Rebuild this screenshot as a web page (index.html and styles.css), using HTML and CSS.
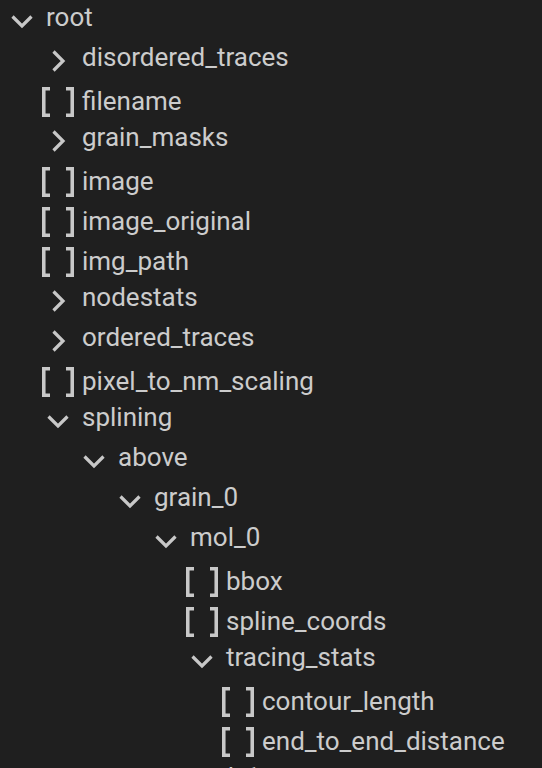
FILE: index.html
```html
<!DOCTYPE html>
<html lang="en">
<head>
<meta charset="utf-8">
<title>Tree</title>
<link rel="stylesheet" href="styles.css">
</head>
<body>
<div class="tree">
  <div class="row branch"><span class="twisty"><svg class="chev-down" width="22" height="14" viewBox="0 0 22 14"><polyline points="1.5,1.5 11,11 20.5,1.5"/></svg></span><span class="label">root</span></div>
  <div class="children">
    <div class="row branch"><span class="twisty"><svg class="chev-right" width="14" height="22" viewBox="0 0 14 22"><polyline points="1.5,1.5 11,11 1.5,20.5"/></svg></span><span class="label">disordered_traces</span></div>
    <div class="row leaf"><span class="twisty"><svg class="brackets" width="32" height="30" viewBox="0 0 32 30"><path d="M8 1.75H1.75V28.25H8M24 1.75H30.25V28.25H24"/></svg></span><span class="label">filename</span></div>
    <div class="row branch"><span class="twisty"><svg class="chev-right" width="14" height="22" viewBox="0 0 14 22"><polyline points="1.5,1.5 11,11 1.5,20.5"/></svg></span><span class="label">grain_masks</span></div>
    <div class="row leaf"><span class="twisty"><svg class="brackets" width="32" height="30" viewBox="0 0 32 30"><path d="M8 1.75H1.75V28.25H8M24 1.75H30.25V28.25H24"/></svg></span><span class="label">image</span></div>
    <div class="row leaf"><span class="twisty"><svg class="brackets" width="32" height="30" viewBox="0 0 32 30"><path d="M8 1.75H1.75V28.25H8M24 1.75H30.25V28.25H24"/></svg></span><span class="label">image_original</span></div>
    <div class="row leaf"><span class="twisty"><svg class="brackets" width="32" height="30" viewBox="0 0 32 30"><path d="M8 1.75H1.75V28.25H8M24 1.75H30.25V28.25H24"/></svg></span><span class="label">img_path</span></div>
    <div class="row branch"><span class="twisty"><svg class="chev-right" width="14" height="22" viewBox="0 0 14 22"><polyline points="1.5,1.5 11,11 1.5,20.5"/></svg></span><span class="label">nodestats</span></div>
    <div class="row branch"><span class="twisty"><svg class="chev-right" width="14" height="22" viewBox="0 0 14 22"><polyline points="1.5,1.5 11,11 1.5,20.5"/></svg></span><span class="label">ordered_traces</span></div>
    <div class="row leaf"><span class="twisty"><svg class="brackets" width="32" height="30" viewBox="0 0 32 30"><path d="M8 1.75H1.75V28.25H8M24 1.75H30.25V28.25H24"/></svg></span><span class="label">pixel_to_nm_scaling</span></div>
    <div class="row branch"><span class="twisty"><svg class="chev-down" width="22" height="14" viewBox="0 0 22 14"><polyline points="1.5,1.5 11,11 20.5,1.5"/></svg></span><span class="label">splining</span></div>
    <div class="children">
      <div class="row branch"><span class="twisty"><svg class="chev-down" width="22" height="14" viewBox="0 0 22 14"><polyline points="1.5,1.5 11,11 20.5,1.5"/></svg></span><span class="label">above</span></div>
      <div class="children">
        <div class="row branch"><span class="twisty"><svg class="chev-down" width="22" height="14" viewBox="0 0 22 14"><polyline points="1.5,1.5 11,11 20.5,1.5"/></svg></span><span class="label">grain_0</span></div>
        <div class="children">
          <div class="row branch"><span class="twisty"><svg class="chev-down" width="22" height="14" viewBox="0 0 22 14"><polyline points="1.5,1.5 11,11 20.5,1.5"/></svg></span><span class="label">mol_0</span></div>
          <div class="children">
            <div class="row leaf"><span class="twisty"><svg class="brackets" width="32" height="30" viewBox="0 0 32 30"><path d="M8 1.75H1.75V28.25H8M24 1.75H30.25V28.25H24"/></svg></span><span class="label">bbox</span></div>
            <div class="row leaf"><span class="twisty"><svg class="brackets" width="32" height="30" viewBox="0 0 32 30"><path d="M8 1.75H1.75V28.25H8M24 1.75H30.25V28.25H24"/></svg></span><span class="label">spline_coords</span></div>
            <div class="row branch"><span class="twisty"><svg class="chev-down" width="22" height="14" viewBox="0 0 22 14"><polyline points="1.5,1.5 11,11 20.5,1.5"/></svg></span><span class="label">tracing_stats</span></div>
            <div class="children">
              <div class="row leaf"><span class="twisty"><svg class="brackets" width="32" height="30" viewBox="0 0 32 30"><path d="M8 1.75H1.75V28.25H8M24 1.75H30.25V28.25H24"/></svg></span><span class="label">contour_length</span></div>
              <div class="row leaf"><span class="twisty"><svg class="brackets" width="32" height="30" viewBox="0 0 32 30"><path d="M8 1.75H1.75V28.25H8M24 1.75H30.25V28.25H24"/></svg></span><span class="label">end_to_end_distance</span></div>
            </div>
          </div>
          <div class="row branch"><span class="twisty"><svg class="chev-right" width="14" height="22" viewBox="0 0 14 22"><polyline points="1.5,1.5 11,11 1.5,20.5"/></svg></span><span class="label">mol_1</span></div>
        </div>
      </div>
    </div>
  </div>
</div>
</body>
</html>
```

FILE: styles.css
```css
html, body {
  margin: 0;
  padding: 0;
  background: #1f1f1f;
}

body {
  height: 768px;
  overflow: hidden;
}

.tree {
  padding: 2px 0 0 4px;
  font-family: Roboto, "Liberation Sans", sans-serif;
  font-size: 26px;
  color: #cccccc;
}

.children {
  padding-left: 36px;
}

.row {
  display: flex;
  align-items: center;
  height: 40px;
  white-space: nowrap;
}

.twisty {
  flex: none;
  width: 36px;
  height: 40px;
  display: flex;
  align-items: center;
  justify-content: center;
}

.twisty svg {
  display: block;
  fill: none;
  stroke: #c8c8c8;
  stroke-width: 3.2;
}

.twisty .brackets {
  stroke-width: 3.6;
  stroke-linejoin: miter;
}

.twisty .chev-right {
  margin-top: -2px;
  margin-left: 1px;
}

.label {
  padding-left: 6px;
  line-height: 30px;
  margin-bottom: 2px;
}

.branch .label {
  margin-bottom: 10px;
}
```
